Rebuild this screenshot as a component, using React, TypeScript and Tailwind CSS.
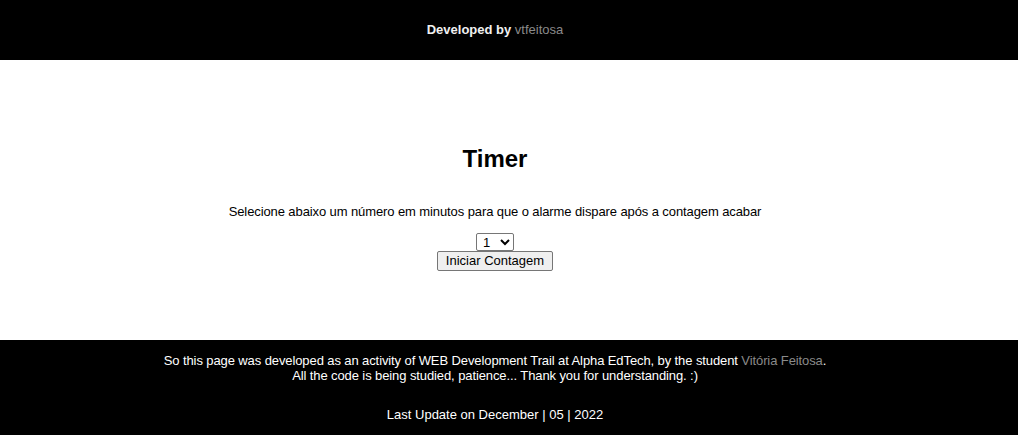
export default function App() {
  return (
    <div className="min-h-[435px] flex flex-col bg-white font-['Liberation_Sans',Arial,sans-serif] text-black">
      <header className="h-[60px] bg-black flex items-center justify-center pr-[28px] text-[13px] font-bold text-[#f0f0f0]">
        <span>
          Developed by <span className="font-normal text-[#8a8a8a]">vtfeitosa</span>
        </span>
      </header>
      <main className="h-[280px] flex flex-col items-center pr-[28px] pt-[85px]">
        <h1 className="text-[24px] font-bold leading-[28px]">Timer</h1>
        <p className="mt-[31px] text-[13px] leading-[15px] tracking-[-0.1px]">
          Selecione abaixo um número em minutos para que o alarme dispare após a contagem acabar
        </p>
        <select className="mt-[14px] w-[38px] h-[18px] text-[13px] border border-[#767676] rounded-[2px] bg-white pl-[2px]">
          <option>1</option>
          <option>2</option>
        </select>
        <button className="h-[20px] px-[8px] text-[13px] leading-[16px] border border-[#767676] rounded-[2px] bg-[#efefef]">
          Iniciar Contagem
        </button>
      </main>
      <footer className="h-[95px] bg-black text-white text-[13px] flex flex-col items-center pr-[28px] pt-[13px] text-center leading-[15px]">
        <p className="tracking-[-0.1px]">
          So this page was developed as an activity of WEB Development Trail at Alpha EdTech, by the student{" "}
          <span className="text-[#8a8a8a]">Vitória Feitosa</span>.
        </p>
        <p className="tracking-[-0.1px]">All the code is being studied, patience... Thank you for understanding. :)</p>
        <p className="mt-[24px]">Last Update on December | 05 | 2022</p>
      </footer>
    </div>
  );
}
